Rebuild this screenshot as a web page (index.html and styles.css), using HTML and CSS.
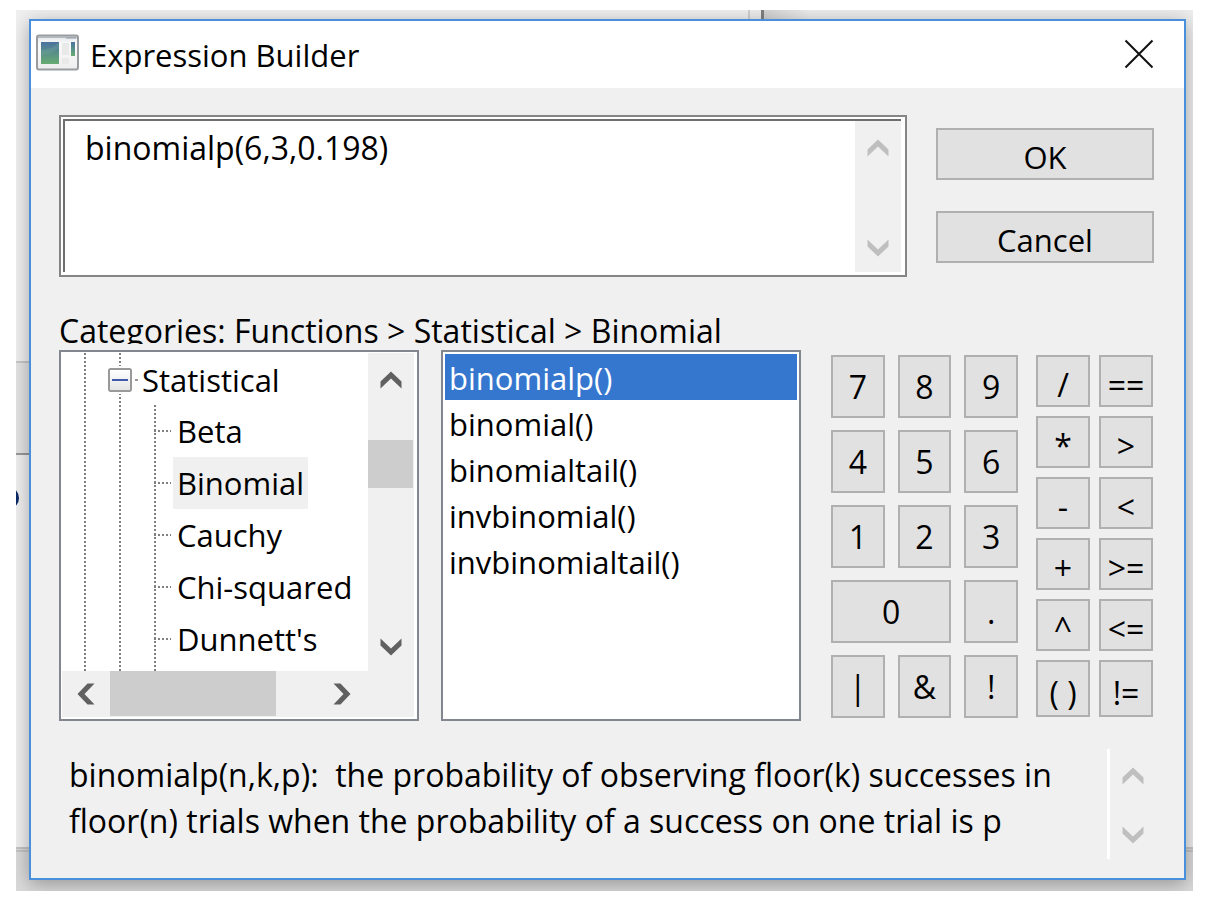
FILE: index.html
```html
<!DOCTYPE html>
<html lang="en">
<head>
<meta charset="utf-8">
<title>Expression Builder</title>
<link rel="stylesheet" href="styles.css">
</head>
<body>
<svg class="defs" aria-hidden="true">
  <symbol id="chev-up" viewBox="0 0 22 18"><path d="M0.5 10.5 11 0.5 21.5 10.5V17.5L11 7.5 0.5 17.5Z"/></symbol>
  <symbol id="chev-down" viewBox="0 0 22 18"><path d="M0.5 7.5 11 17.5 21.5 7.5V0.5L11 10.5 0.5 0.5Z"/></symbol>
  <symbol id="chev-left" viewBox="0 0 18 22"><path d="M10.5 0.5 0.5 11 10.5 21.5H17.5L7.5 11 17.5 0.5Z"/></symbol>
  <symbol id="chev-right" viewBox="0 0 18 22"><path d="M7.5 0.5 17.5 11 7.5 21.5H0.5L10.5 11 0.5 0.5Z"/></symbol>
</svg>
<div class="desktop">
  <div class="behind behind-top"></div>
  <div class="behind behind-left"></div>
  <div class="behind behind-bottom"></div>
  <div class="behind behind-mark"></div>
  <main class="window">
    <header class="titlebar">
      <svg class="app-icon" viewBox="0 0 43 37" aria-hidden="true">
        <defs>
          <linearGradient id="pane" x1="0" y1="0" x2="0" y2="1"><stop offset="0" stop-color="#4a739f"/><stop offset="1" stop-color="#68ac72"/></linearGradient>
          <linearGradient id="frame" x1="0" y1="0" x2="0" y2="1"><stop offset="0" stop-color="#dfe3e8"/><stop offset=".25" stop-color="#fafafa"/><stop offset="1" stop-color="#eeeeee"/></linearGradient>
        </defs>
        <rect x="1" y="1.5" width="41" height="34" rx="2" fill="url(#frame)" stroke="#999c9f" stroke-width="2"/>
        <path d="M2 3H41" stroke="#b4b7bb" stroke-width="2"/>
        <path d="M30 4H40" stroke="#8c99ad" stroke-width="1"/>
        <rect x="5" y="8" width="18" height="22" fill="url(#pane)"/>
        <path d="M5 16Q15 16 23 8V14Q15 21 5 21Z" fill="#7db0a0" opacity=".25"/>
        <rect x="26" y="9" width="7" height="12" fill="#e9e9e9"/>
        <rect x="26" y="24" width="7" height="6" fill="#e9e9e9"/>
        <rect x="35" y="8" width="4" height="14" fill="url(#pane)"/>
      </svg>
      <h1 class="title">Expression Builder</h1>
      <button class="close" type="button" aria-label="Close">
        <svg viewBox="0 0 30 30" width="30" height="30" aria-hidden="true"><path d="M1.5 1.5 28.5 28.5M28.5 1.5 1.5 28.5"/></svg>
      </button>
    </header>
    <div class="content">
      <section class="entry">
        <div class="editor">
          <textarea class="expr" aria-label="Expression" spellcheck="false">binomialp(6,3,0.198)</textarea>
          <div class="vbar dim">
            <button type="button" aria-label="Scroll up"><svg class="cv"><use href="#chev-up"/></svg></button>
            <button type="button" aria-label="Scroll down"><svg class="cv"><use href="#chev-down"/></svg></button>
          </div>
        </div>
        <div class="actions">
          <button class="btn" type="button">OK</button>
          <button class="btn" type="button">Cancel</button>
        </div>
      </section>
      <p class="path">Categories: Functions &gt; Statistical &gt; Binomial</p>
      <section class="panels">
        <div class="tree">
          <div class="view">
            <div class="node"><button class="toggle" type="button" aria-label="Collapse Statistical"></button><span class="stub"></span><span>Statistical</span></div>
            <ul class="leaves">
              <li><span class="leaf">Beta</span></li>
              <li><span class="leaf current">Binomial</span></li>
              <li><span class="leaf">Cauchy</span></li>
              <li><span class="leaf">Chi-squared</span></li>
              <li><span class="leaf">Dunnett's</span></li>
            </ul>
          </div>
          <div class="vbar">
            <button type="button" aria-label="Scroll up"><svg class="cv"><use href="#chev-up"/></svg></button>
            <span class="vthumb"></span>
            <button type="button" aria-label="Scroll down"><svg class="cv"><use href="#chev-down"/></svg></button>
          </div>
          <div class="hbar">
            <button type="button" aria-label="Scroll left"><svg class="ch"><use href="#chev-left"/></svg></button>
            <span class="hthumb"></span>
            <button type="button" aria-label="Scroll right"><svg class="ch"><use href="#chev-right"/></svg></button>
          </div>
        </div>
        <select class="functions" size="5" aria-label="Functions">
          <option selected>binomialp()</option>
          <option>binomial()</option>
          <option>binomialtail()</option>
          <option>invbinomial()</option>
          <option>invbinomialtail()</option>
        </select>
        <div class="digits">
          <button class="btn" type="button">7</button><button class="btn" type="button">8</button><button class="btn" type="button">9</button>
          <button class="btn" type="button">4</button><button class="btn" type="button">5</button><button class="btn" type="button">6</button>
          <button class="btn" type="button">1</button><button class="btn" type="button">2</button><button class="btn" type="button">3</button>
          <button class="btn wide" type="button">0</button><button class="btn" type="button">.</button>
          <button class="btn" type="button">|</button><button class="btn" type="button">&amp;</button><button class="btn" type="button">!</button>
        </div>
        <div class="operators">
          <button class="btn" type="button">/</button><button class="btn" type="button">==</button>
          <button class="btn" type="button">*</button><button class="btn" type="button">&gt;</button>
          <button class="btn" type="button">-</button><button class="btn" type="button">&lt;</button>
          <button class="btn" type="button">+</button><button class="btn" type="button">&gt;=</button>
          <button class="btn" type="button">^</button><button class="btn" type="button">&lt;=</button>
          <button class="btn" type="button">( )</button><button class="btn" type="button">!=</button>
        </div>
      </section>
      <section class="help">
        <p class="help-text">binomialp(n,k,p):&nbsp; the probability of observing floor(k) successes in floor(n) trials when the probability of a success on one trial is p</p>
        <div class="vbar dim">
          <button type="button" aria-label="Scroll up"><svg class="cv"><use href="#chev-up"/></svg></button>
          <button type="button" aria-label="Scroll down"><svg class="cv"><use href="#chev-down"/></svg></button>
        </div>
      </section>
    </div>
  </main>
</div>
</body>
</html>
```
FILE: styles.css
```css
* { box-sizing: border-box; }
body {
  margin: 0;
  padding: 10px 17px 13px 16px;
  background: #fff;
  color: #000;
  font: 32px/46px "Open Sans", "Noto Sans", sans-serif;
}
h1, p, ul { margin: 0; padding: 0; }
button, textarea, select { font: inherit; color: inherit; margin: 0; padding: 0; border: 0; background: none; border-radius: 0; }
.defs { position: absolute; width: 0; height: 0; }

.desktop {
  position: relative;
  overflow: hidden;
  padding: 9px 7px 11px 13px;
  background: #f0f0f0;
}
.behind { position: absolute; }
.behind-top { left: 732px; right: 0; top: 0; height: 100%; border-left: 2px solid #d0d0d0; background: linear-gradient(90deg, #ededed 11px, #808080 11px 14px, #d2d2d2 14px, #ededed 60px); }
.behind-left { left: 0; top: 351px; width: 20px; height: 94px; background: #e4e4e4; border-top: 2px solid #c8c8c8; border-bottom: 2px solid #999; }
.behind-bottom { left: 0; right: 0; top: 837px; bottom: 0; background: #dadada; border-top: 5px double #c4c4c4; }
.behind-mark { left: -14px; top: 478px; width: 17px; height: 20px; border: 4px solid #0b2a66; border-radius: 50%; }

.window {
  position: relative;
  border: 2px solid #4a8fdb;
  background: #f0f0f0;
  box-shadow: 0 4px 18px rgba(0, 0, 0, .32);
}
.titlebar { display: flex; align-items: center; height: 67px; padding: 0 30px 0 5px; background: #fff; }
.app-icon { width: 43px; height: 37px; margin-bottom: 4px; }
.title { flex: 1; margin-left: 11px; font-size: 31px; font-weight: 400; }
.close { display: flex; margin-bottom: 2px; }
.close path { stroke: #111; stroke-width: 2; fill: none; }

.content { padding: 27px 30px 19px 28px; }
.entry { display: grid; grid-template-columns: 1fr 218px; gap: 29px; }
.editor {
  display: flex;
  height: 162px;
  border: 2px solid #858585;
  background: #fff;
  padding: 2px 4px 3px 2px;
}
.expr { flex: 1; min-width: 0; resize: none; outline: 0; overflow: hidden; padding: 4px 20px; border-top: 2px solid #6e6e6e; border-left: 2px solid #6e6e6e; }
.editor .vbar { border-top: 2px solid #6e6e6e; padding-top: 3px; }
.actions { display: grid; grid-template-rows: 52px 52px; gap: 31px; align-content: start; padding-top: 13px; font-size: 31px; }
.actions .btn { padding-top: 5px; }
.btn { display: flex; align-items: center; justify-content: center; border: 2px solid #b0b0b0; background: #e1e1e1; min-width: 0; }

.vbar { display: flex; flex-direction: column; justify-content: space-between; align-items: stretch; width: 46px; background: #f0f0f0; fill: #606060; }
.vbar button { display: flex; justify-content: center; align-items: center; height: 48px; }
.vbar.dim { fill: #bfbfbf; }
.cv { width: 22px; height: 18px; }
.ch { width: 18px; height: 22px; }

.path { height: 34px; margin: 33px 0 6px; line-height: 42px; overflow: hidden; white-space: nowrap; }

.panels { display: grid; grid-template-columns: 360fr 360fr 191fr 118fr; column-gap: 22px; height: 371px; }
.tree, .functions { border: 2px solid #82878f; background: #fff; font-size: 31px; }
.tree { display: grid; grid-template: 318px 1fr / 1fr 46px; padding: 1px 3px 2px 1px; }
.view {
  display: flex;
  flex-direction: column;
  overflow: hidden;
  background:
    repeating-linear-gradient(#808080 0 2px, #fff 2px 4px) 22px 0 / 2px 100% no-repeat,
    repeating-linear-gradient(#808080 0 2px, #fff 2px 4px) 57px 0 / 2px 100% no-repeat;
}
.node { display: flex; align-items: center; height: 52px; padding: 2px 0 0 46px; }
.toggle { display: flex; align-items: center; justify-content: center; width: 24px; height: 24px; border: 2px solid #999; border-radius: 2px; background: linear-gradient(#fff, #e4e4e4); outline: 2px solid #fff; }
.toggle::before { content: ""; width: 16px; height: 2px; background: #4058a8; }
.stub { width: 3px; height: 2px; margin: 0 4px 0 3px; background: #999; }
.leaves { flex: 1; list-style: none; margin-left: 92px; background: repeating-linear-gradient(#808080 0 2px, #fff 2px 4px) 0 0 / 2px 100% no-repeat; }
.leaves li { display: flex; align-items: center; height: 52px; white-space: nowrap; }
.leaves li::before { content: ""; flex: none; width: 17px; height: 2px; background: repeating-linear-gradient(90deg, #808080 0 2px, #fff 2px 4px); }
.leaf { line-height: 50px; padding: 1px 4px; margin-left: 2px; }
.current { background: #f0f0f0; }
.tree .vbar { padding-top: 3px; }
.vthumb { height: 48px; margin: 36px 1px auto 0; background: #cdcdcd; }
.hbar { grid-column: 1 / 3; display: flex; background: #f0f0f0; padding-right: 48px; fill: #606060; }
.hbar button { display: flex; justify-content: center; align-items: center; width: 48px; }
.hthumb { width: 166px; margin: 0 auto 1px 0; background: #cdcdcd; }

.functions { width: 100%; height: 100%; padding: 2px; outline: 0; overflow: hidden; }
.functions option { height: 46px; min-height: 46px; line-height: 42px; padding: 3px 4px 1px; }
.functions option:checked { background: #3577cf linear-gradient(#3577cf, #3577cf); color: #fff; }

.digits, .operators { display: grid; align-content: start; padding-top: 5px; }
.digits { grid-template-columns: repeat(3, 1fr); grid-template-rows: repeat(5, 63px); gap: 12px 13px; margin-left: 8px; margin-right: -4px; }
.wide { grid-column: span 2; }
.operators { grid-template-columns: 1fr 1fr; grid-template-rows: repeat(5, 52px) 57px; gap: 9px; margin-right: 1px; }
.operators .btn { padding-top: 8px; }

.help { display: flex; margin-top: 28px; }
.help-text { flex: 1; padding: 3px 20px 0 10px; }
.help .vbar { height: 110px; width: 49px; border-left: 3px solid #fff; padding: 3px 0 0; margin-right: -2px; }
```
